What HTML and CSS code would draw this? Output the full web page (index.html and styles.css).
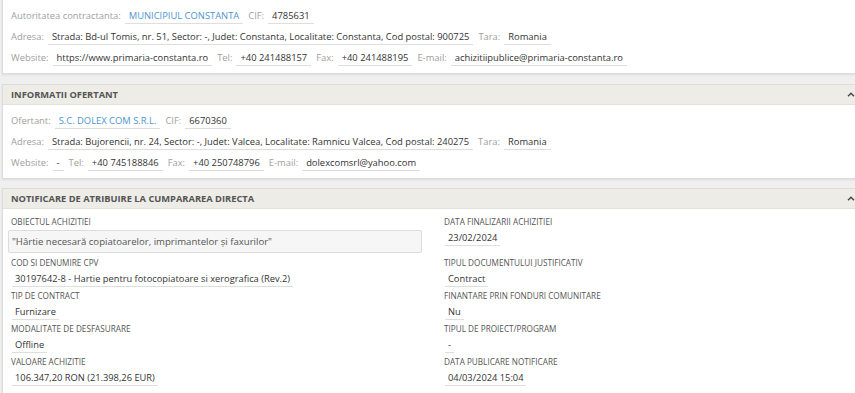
FILE: index.html
```html
<!DOCTYPE html>
<html lang="ro">
<head>
<meta charset="utf-8">
<title>Notificare</title>
<link rel="stylesheet" href="styles.css">
</head>
<body>
<div class="page">
  <section class="panel panel-first">
    <div class="panel-body">
      <div class="row">
        <span class="lbl">Autoritatea contractanta:</span><span class="val link">MUNICIPIUL CONSTANTA</span>
        <span class="lbl">CIF:</span><span class="val">4785631</span>
      </div>
      <div class="row">
        <span class="lbl">Adresa:</span><span class="val">Strada: Bd-ul Tomis, nr. 51, Sector: -, Judet: Constanta, Localitate: Constanta, Cod postal: 900725</span>
        <span class="lbl">Tara:</span><span class="val">Romania</span>
      </div>
      <div class="row">
        <span class="lbl">Website:</span><span class="val">https://www.primaria-constanta.ro</span>
        <span class="lbl">Tel:</span><span class="val">+40 241488157</span>
        <span class="lbl">Fax:</span><span class="val">+40 241488195</span>
        <span class="lbl">E-mail:</span><span class="val">achizitiipublice@primaria-constanta.ro</span>
      </div>
    </div>
  </section>

  <section class="panel">
    <header class="panel-head">
      <h2 class="panel-title">INFORMATII OFERTANT</h2>
      <svg class="chevron" width="8" height="5" viewBox="0 0 8 5"><path d="M1 4.2 L4 1.2 L7 4.2" fill="none" stroke="#4a4a4a" stroke-width="1.5"/></svg>
    </header>
    <div class="panel-body">
      <div class="row">
        <span class="lbl">Ofertant:</span><span class="val link">S.C. DOLEX COM S.R.L.</span>
        <span class="lbl">CIF:</span><span class="val">6670360</span>
      </div>
      <div class="row">
        <span class="lbl">Adresa:</span><span class="val">Strada: Bujorencii, nr. 24, Sector: -, Judet: Valcea, Localitate: Ramnicu Valcea, Cod postal: 240275</span>
        <span class="lbl">Tara:</span><span class="val">Romania</span>
      </div>
      <div class="row">
        <span class="lbl">Website:</span><span class="val">-</span>
        <span class="lbl">Tel:</span><span class="val">+40 745188846</span>
        <span class="lbl">Fax:</span><span class="val">+40 250748796</span>
        <span class="lbl">E-mail:</span><span class="val">dolexcomsrl@yahoo.com</span>
      </div>
    </div>
  </section>

  <section class="panel">
    <header class="panel-head">
      <h2 class="panel-title">NOTIFICARE DE ATRIBUIRE LA CUMPARAREA DIRECTA</h2>
      <svg class="chevron" width="8" height="5" viewBox="0 0 8 5"><path d="M1 4.2 L4 1.2 L7 4.2" fill="none" stroke="#4a4a4a" stroke-width="1.5"/></svg>
    </header>
    <div class="panel-body grid">
      <div class="field field-wide">
        <div class="f-lbl">OBIECTUL ACHIZITIEI</div>
        <div class="f-input">"Hârtie necesară copiatoarelor, imprimantelor și faxurilor"</div>
      </div>
      <div class="field">
        <div class="f-lbl">DATA FINALIZARII ACHIZITIEI</div>
        <div class="f-val"><span>23/02/2024</span></div>
      </div>
      <div class="field">
        <div class="f-lbl">COD SI DENUMIRE CPV</div>
        <div class="f-val"><span>30197642-8 - Hartie pentru fotocopiatoare si xerografica (Rev.2)</span></div>
      </div>
      <div class="field">
        <div class="f-lbl">TIPUL DOCUMENTULUI JUSTIFICATIV</div>
        <div class="f-val"><span>Contract</span></div>
      </div>
      <div class="field">
        <div class="f-lbl">TIP DE CONTRACT</div>
        <div class="f-val"><span>Furnizare</span></div>
      </div>
      <div class="field">
        <div class="f-lbl">FINANTARE PRIN FONDURI COMUNITARE</div>
        <div class="f-val"><span>Nu</span></div>
      </div>
      <div class="field">
        <div class="f-lbl">MODALITATE DE DESFASURARE</div>
        <div class="f-val"><span>Offline</span></div>
      </div>
      <div class="field">
        <div class="f-lbl">TIPUL DE PROIECT/PROGRAM</div>
        <div class="f-val"><span>-</span></div>
      </div>
      <div class="field">
        <div class="f-lbl">VALOARE ACHIZITIE</div>
        <div class="f-val"><span>106.347,20 RON (21.398,26 EUR)</span></div>
      </div>
      <div class="field">
        <div class="f-lbl">DATA PUBLICARE NOTIFICARE</div>
        <div class="f-val"><span>04/03/2024 15:04</span></div>
      </div>
    </div>
  </section>
</div>
</body>
</html>
```

FILE: styles.css
```css
html, body {
  margin: 0;
  padding: 0;
  background: #efefef;
  overflow: hidden;
}
body {
  font-family: "Open Sans", "DejaVu Sans", sans-serif;
  color: #333;
  width: 855px;
  height: 393px;
}
.page {
  padding-left: 2px;
  width: 862px;
}
.panel {
  background: #fff;
  border: 1px solid #dcdcdc;
  box-shadow: 0 1px 2px rgba(0,0,0,0.08);
  margin-bottom: 9px;
}
.panel-first {
  margin-top: -1px;
  margin-bottom: 10px;
}
.panel-head {
  height: 19px;
  background: #edece7;
  border-bottom: 1px solid #e2e1dc;
  display: flex;
  align-items: center;
  justify-content: space-between;
  padding: 0 8px 0 8px;
}
.panel-title {
  margin: 0;
  font-size: 9.3px;
  font-weight: 700;
  color: #555;
}
.chevron {
  display: block;
}
.panel-body {
  padding: 5px 8px 5px 8px;
}
.row {
  height: 21px;
  display: flex;
  align-items: center;
  font-size: 9.4px;
  white-space: nowrap;
}
.lbl {
  color: #a0a0a0;
  margin-right: 4px;
}
.val {
  color: #333;
  padding: 1px 4px 1px 4px;
  border-bottom: 1px solid #dedede;
  margin-right: 5px;
  line-height: 13px;
}
.val.link {
  color: #4e95cf;
}
.grid {
  display: grid;
  grid-template-columns: 1fr 1fr;
  column-gap: 22px;
  align-items: start;
  padding-top: 6px;
}
.field {
  padding-bottom: 2px;
}
.field-wide {
  padding-bottom: 3px;
}
.f-lbl {
  font-size: 8.2px;
  line-height: 13px;
  color: #555;
}
.f-input {
  margin-top: 2px;
  margin-left: -3px;
  height: 21px;
  line-height: 21px;
  padding-left: 3px;
  border: 1px solid #dcdcdc;
  border-radius: 2px;
  background: #f6f6f6;
  color: #555;
  font-size: 9.6px;
}
.f-val {
  margin-top: 2px;
  height: 16px;
  font-size: 9.3px;
}
.f-val span {
  display: inline-block;
  line-height: 15px;
  padding: 0 3px;
  margin-left: 1px;
  border-bottom: 1px solid #dedede;
  color: #333;
}
```
